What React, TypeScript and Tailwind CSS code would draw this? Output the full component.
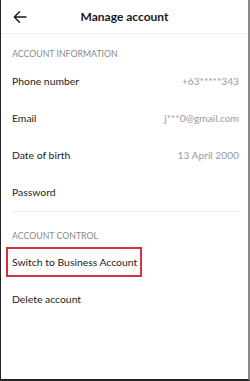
import React from "react";

const Row = ({ label, value }: { label: string; value?: string }) => (
  <div className="flex h-[37px] items-center justify-between pl-[11px] pr-[9px]">
    <span className="text-[10.4px] text-[#222]">{label}</span>
    {value && <span className="text-[10.2px] text-[#9a9a9a]">{value}</span>}
  </div>
);

export default function App() {
  return (
    <div className="relative h-[381px] w-[250px] overflow-hidden bg-white border-l border-l-[#222] border-r-2 border-r-[#888] border-b-2 border-b-[#222] font-[Lato,sans-serif]">
      <div className="relative flex h-[34px] items-center justify-center border-b border-[#eeeeee]">
        <svg
          className="absolute left-[12px] top-[10px]"
          width="14"
          height="14"
          viewBox="0 0 14 14"
          fill="none"
          stroke="#161823"
          strokeWidth="1.4"
          strokeLinecap="round"
          strokeLinejoin="round"
        >
          <path d="M13 7H1.5M6.5 1.8L1.3 7l5.2 5.2" />
        </svg>
        <span className="text-[12px] font-bold text-[#161823]">Manage account</span>
      </div>
      <div className="pl-[11px] pt-[13px] pb-[3px] text-[8.75px] text-[#8a8a8a]">
        ACCOUNT INFORMATION
      </div>
      <Row label="Phone number" value="+63*****343" />
      <Row label="Email" value="j***0@gmail.com" />
      <Row label="Date of birth" value="13 April 2000" />
      <Row label="Password" />
      <div className="ml-[11px] mr-[9px] border-t border-[#eeeeee]" />
      <div className="pl-[11px] pt-[17px] pb-[2px] text-[8.75px] text-[#8a8a8a]">
        ACCOUNT CONTROL
      </div>
      <div className="relative">
        <Row label="Switch to Business Account" />
        <div className="absolute left-[5px] top-[3px] h-[30px] w-[136px] border-2 border-[#d7303a]" />
      </div>
      <Row label="Delete account" />
    </div>
  );
}
